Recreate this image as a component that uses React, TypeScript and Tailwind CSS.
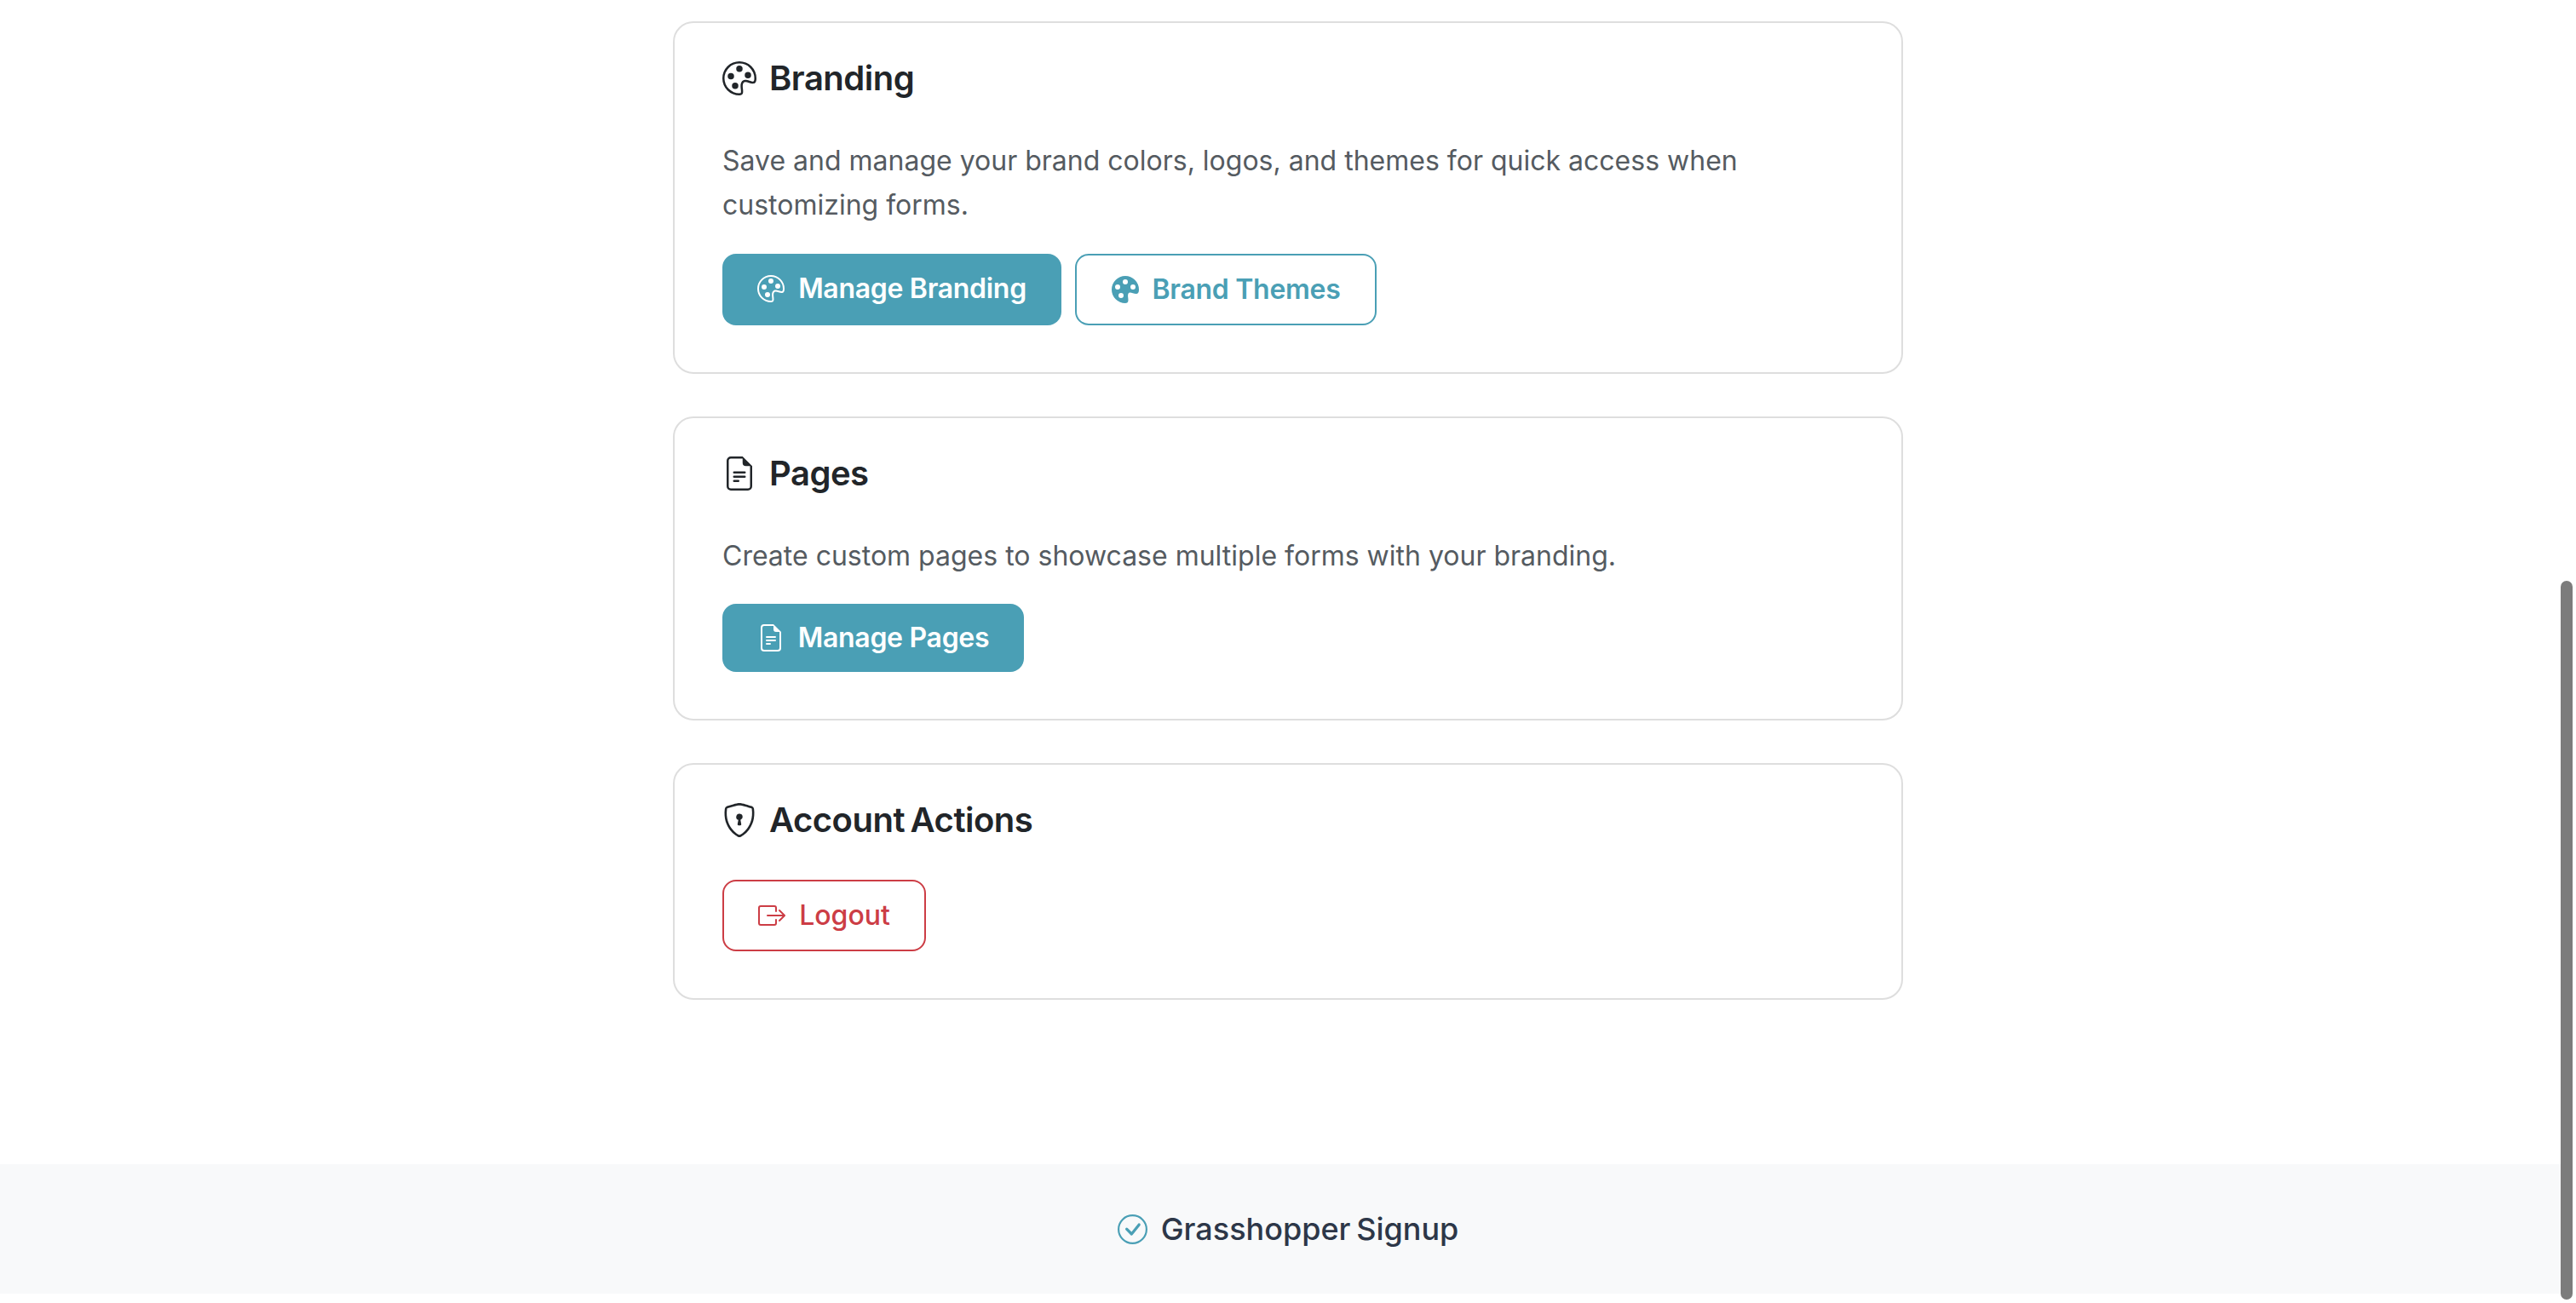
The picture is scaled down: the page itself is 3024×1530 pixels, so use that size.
import { BsBoxArrowRight, BsCheckCircle, BsFileEarmarkText, BsPalette, BsPaletteFill, BsShieldLock } from 'react-icons/bs';
import type { ReactNode } from 'react';

function Card({ icon, title, children, className }: { icon: ReactNode; title: string; children: ReactNode; className: string }) {
  return (
    <section className={`w-[1444px] rounded-3xl border-2 border-[#dedede] bg-white px-14 pt-[41px] ${className}`}>
      <h2 className="flex h-[48px] items-center gap-[15px] text-[40px] leading-[48px] font-semibold tracking-[-0.5px] [word-spacing:-3px] text-[#212529]">
        {icon}
        {title}
      </h2>
      {children}
    </section>
  );
}

export default function App() {
  return (
    <div className="relative h-[1530px] w-full overflow-hidden bg-white font-['Inter',sans-serif]">
      <main className="flex flex-col items-center gap-[50px] pt-[25px]">
        {/* Branding */}
        <Card className="h-[414px]" title="Branding" icon={<BsPalette size={40} />}>
          <p className="mt-[47px] text-[32px] leading-[52px] text-[#555b61]">
            Save and manage your brand colors, logos, and themes for quick access when customizing forms.
          </p>
          <div className="mt-[31px] flex gap-4">
            <button className="flex h-[84px] w-[398px] items-center justify-center gap-4 rounded-2xl bg-[#4a9fb5] pb-[2px] text-[32px] font-semibold tracking-[-0.3px] text-white">
              <BsPalette size={32} />
              Manage Branding
            </button>
            <button className="flex h-[84px] w-[354px] items-center justify-center gap-4 rounded-2xl border-2 border-[#4a9fb5] bg-white text-[32px] font-semibold tracking-[-0.3px] text-[#4a9fb5]">
              <BsPaletteFill size={32} />
              Brand Themes
            </button>
          </div>
        </Card>

        {/* Pages */}
        <Card className="h-[357px]" title="Pages" icon={<BsFileEarmarkText size={40} />}>
          <p className="mt-[47px] text-[32px] leading-[52px] text-[#555b61]">
            Create custom pages to showcase multiple forms with your branding.
          </p>
          <button className="mt-[30px] flex h-[80px] w-[354px] items-center justify-center gap-4 rounded-2xl bg-[#4a9fb5] text-[32px] font-semibold tracking-[-0.3px] text-white">
            <BsFileEarmarkText size={32} />
            Manage Pages
          </button>
        </Card>

        {/* Account */}
        <Card className="h-[278px]" title="Account Actions" icon={<BsShieldLock size={40} />}>
          <button className="mt-[46px] flex h-[84px] w-[239px] items-center justify-center gap-4 rounded-2xl border-2 border-[#cc3d45] bg-white text-[32px] font-medium text-[#cc3d45]">
            <BsBoxArrowRight size={32} />
            Logout
          </button>
        </Card>
      </main>

      <footer className="mt-[193px] flex h-[152px] items-center justify-center gap-4 bg-[#f8f9fa] text-[36px] font-medium [word-spacing:-3px] text-[#2d3748]">
        <BsCheckCircle size={35} className="text-[#4a9fb5]" />
        Grasshopper Signup
      </footer>

      {/* scrollbar */}
      <div className="absolute top-0 right-0 h-full w-[18px] bg-white">
        <div className="absolute top-[682px] left-0 h-[844px] w-[14px] rounded-full bg-[#7c7c7c]" />
      </div>
    </div>
  );
}
